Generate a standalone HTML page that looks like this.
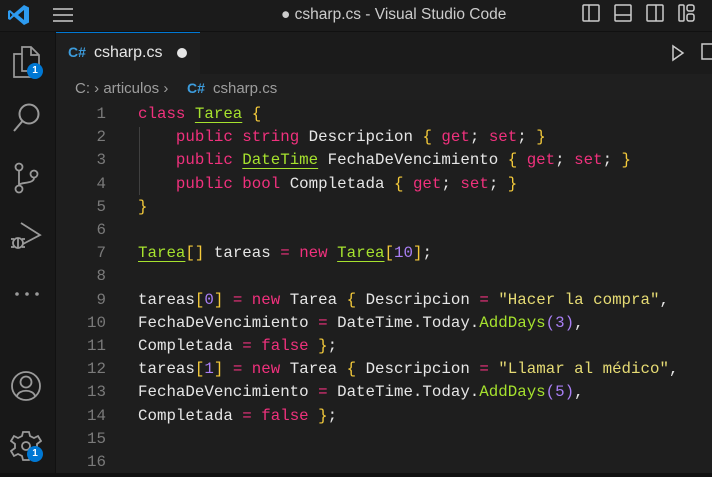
<!DOCTYPE html><html><head><style>
body{margin:0;width:712px;height:477px;background:#1e1e1e;overflow:hidden;font-family:"Liberation Sans",sans-serif;position:relative}
.title{position:absolute;left:0;top:0;width:712px;height:31px;background:#1b1b1b;border-bottom:1px solid #111}
.act{position:absolute;left:0;top:32px;width:55px;height:445px;background:#181818;border-right:1px solid #111}
.tabs{position:absolute;left:56px;top:32px;width:656px;height:42px;background:#1b1b1b}
.tab{position:absolute;left:0;top:0;width:144px;height:42px;background:#1f1f1f;border-top:1px solid #0078d4;box-sizing:border-box}
.bc{position:absolute;left:56px;top:74px;width:656px;height:26px;background:#1f1f1f;color:#9d9d9d;font-size:15px}
.code{position:absolute;left:56px;top:103px;font-family:"Liberation Mono",monospace;font-size:15.8px;line-height:23.2px;color:#e6e6e6;white-space:pre}
.ln{position:absolute;left:56px;top:103px;width:50px;text-align:right;font-family:"Liberation Mono",monospace;font-size:15.8px;line-height:23.2px;color:#7a7a7a;white-space:pre}
.k{color:#f0317d}.t{color:#a6e22e;text-decoration:underline;text-underline-offset:4px}.y{color:#f5cb3b}.s{color:#e6db74}.n{color:#a97ff5}.f{color:#a6e22e}
.badge{position:absolute;width:16px;height:16px;border-radius:50%;background:#0078d4;color:#fff;font-size:10px;text-align:center;line-height:16px;font-weight:bold}
svg{position:absolute}
</style></head><body>
<div class="title">
<svg style="left:7px;top:3px" width="24" height="24" viewBox="0 0 24 24"><path d="M17 2 L22 4.5 V19.5 L17 22 L7 13.5 L3 17 L1 16 V8 L3 7 L7 10.5 Z M17 7 L11 12 L17 17 Z M3 9.5 V14.5 L5.5 12 Z" fill="#2d9bf0" fill-rule="evenodd"/></svg>
<svg style="left:52px;top:7px" width="22" height="16"><path d="M1 2H21M1 8H21M1 14H21" stroke="#ccc" stroke-width="1.6"/></svg>
<div style="position:absolute;left:281px;top:6px;color:#ccc;font-size:15.5px">● csharp.cs - Visual Studio Code</div>
<svg style="left:581px;top:3px" width="131" height="22" fill="none" stroke="#ccc" stroke-width="1.5"><rect x="2" y="2" width="16" height="16" rx="1"/><path d="M8 2V18"/><rect x="34" y="2" width="16" height="16" rx="1"/><path d="M34 12H50"/><rect x="66" y="2" width="16" height="16" rx="1"/><path d="M75 2V18"/><rect x="98" y="2" width="5" height="16" rx="1"/><rect x="106" y="2" width="7" height="6" rx="2"/><rect x="106" y="11" width="7" height="7" rx="2"/></svg>
</div>
<div class="act">
<svg style="left:11px;top:13px" width="32" height="34" fill="none" stroke="#9a9a9a" stroke-width="1.7"><path d="M11 2H20L28 10V26H11Z M20 2V10H28"/><path d="M11 9H3V32H20V26"/></svg>
<div class="badge" style="left:27px;top:31px">1</div>
<svg style="left:11px;top:70px" width="32" height="34" fill="none" stroke="#9a9a9a" stroke-width="2"><circle cx="18" cy="12" r="9.5"/><path d="M11.5 19L3 29"/></svg>
<svg style="left:12px;top:130px" width="30" height="34" fill="none" stroke="#9a9a9a" stroke-width="1.8"><circle cx="7" cy="5" r="3.5"/><circle cx="7" cy="27" r="3.5"/><circle cx="22" cy="12" r="3.5"/><path d="M7 9V23M22 16C22 22 8 20 7 23"/></svg>
<svg style="left:9px;top:188px" width="36" height="36" fill="none" stroke="#9a9a9a" stroke-width="1.8"><path d="M12 3L31 15L14 24"/><circle cx="9" cy="23" r="5"/><path d="M2 19H5M2 27H5M13 19H16M13 27H16M9 18V28"/></svg>
<svg style="left:14px;top:258px" width="28" height="8" fill="#9a9a9a"><circle cx="3" cy="4" r="1.8"/><circle cx="13" cy="4" r="1.8"/><circle cx="23" cy="4" r="1.8"/></svg>
<svg style="left:10px;top:338px" width="32" height="32" fill="none" stroke="#9a9a9a" stroke-width="1.8"><circle cx="16" cy="16" r="14"/><circle cx="16" cy="12" r="5.5"/><path d="M7 26C9 19 23 19 25 26"/></svg>
<svg style="left:10px;top:398px" width="32" height="32" fill="none" stroke="#9a9a9a" stroke-width="1.8"><path d="M13 2H19L20 6L24 8L28 6L31 11L27 14V18L31 21L28 26L24 24L20 26L19 30H13L12 26L8 24L4 26L1 21L5 18V14L1 11L4 6L8 8L12 6Z"/><circle cx="16" cy="16" r="4"/></svg>
<div class="badge" style="left:27px;top:414px">1</div>
</div>
<div class="tabs"><div class="tab">
<span style="position:absolute;left:12px;top:11px;color:#3d9cdc;font-weight:bold;font-size:14px">C#</span>
<span style="position:absolute;left:38px;top:11px;color:#e6e6e6;font-size:16px">csharp.cs</span>
<span style="position:absolute;left:121px;top:15px;width:10px;height:10px;border-radius:50%;background:#e6e6e6"></span></div>
<svg style="left:615px;top:12px" width="14" height="18" fill="none" stroke="#ccc" stroke-width="1.5"><path d="M2 2L12 9L2 16Z"/></svg>
<svg style="left:644px;top:10px" width="12" height="20" fill="none" stroke="#ccc" stroke-width="1.5"><rect x="2" y="2" width="12" height="15"/></svg>
</div>
<div class="bc"><span style="position:absolute;left:19px;top:6px">C: › articulos ›</span><span style="position:absolute;left:131px;top:6px;color:#3d9cdc;font-weight:bold;font-size:14px">C#</span><span style="position:absolute;left:157px;top:6px">csharp.cs</span></div>
<div class="ln">1
2
3
4
5
6
7
8
9
10
11
12
13
14
15
16</div>
<div style="position:absolute;left:139px;top:127px;width:1px;height:68px;background:#404040"></div>
<div class="code" style="left:138px"><span class="k">class</span> <span class="t">Tarea</span> <span class="y">{</span>
    <span class="k">public</span> <span class="k">string</span> Descripcion <span class="y">{</span> <span class="k">get</span>; <span class="k">set</span>; <span class="y">}</span>
    <span class="k">public</span> <span class="t">DateTime</span> FechaDeVencimiento <span class="y">{</span> <span class="k">get</span>; <span class="k">set</span>; <span class="y">}</span>
    <span class="k">public</span> <span class="k">bool</span> Completada <span class="y">{</span> <span class="k">get</span>; <span class="k">set</span>; <span class="y">}</span>
<span class="y">}</span>

<span class="t">Tarea</span><span class="y">[]</span> tareas <span class="k">=</span> <span class="k">new</span> <span class="t">Tarea</span><span class="y">[</span><span class="n">10</span><span class="y">]</span>;

tareas<span class="y">[</span><span class="n">0</span><span class="y">]</span> <span class="k">=</span> <span class="k">new</span> Tarea <span class="y">{</span> Descripcion <span class="k">=</span> <span class="s">"Hacer la compra"</span>,
FechaDeVencimiento <span class="k">=</span> DateTime.Today.<span class="f">AddDays</span><span class="n">(</span><span class="n">3</span><span class="n">)</span>,
Completada <span class="k">=</span> <span class="k">false</span> <span class="y">}</span>;
tareas<span class="y">[</span><span class="n">1</span><span class="y">]</span> <span class="k">=</span> <span class="k">new</span> Tarea <span class="y">{</span> Descripcion <span class="k">=</span> <span class="s">"Llamar al médico"</span>,
FechaDeVencimiento <span class="k">=</span> DateTime.Today.<span class="f">AddDays</span><span class="n">(</span><span class="n">5</span><span class="n">)</span>,
Completada <span class="k">=</span> <span class="k">false</span> <span class="y">}</span>;</div>
<div style="position:absolute;left:0;top:473px;width:712px;height:4px;background:#111"></div>
</body></html>
